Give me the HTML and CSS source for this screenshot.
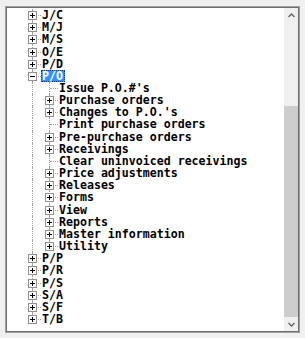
FILE: index.html
```html
<!DOCTYPE html>
<html lang="en">
<head>
    <meta charset="UTF-8">
    <meta name="viewport" content="width=device-width, initial-scale=1.0">
    <title>Menu tree</title>
    <link rel="stylesheet" href="styles.css">
</head>
<body>
    <div class="frame">
        <div class="tree">
            <div class="row"><span class="cell tee"><i class="box plus"></i></span><span class="label">J/C</span></div>
            <div class="row"><span class="cell tee"><i class="box plus"></i></span><span class="label">M/J</span></div>
            <div class="row"><span class="cell tee"><i class="box plus"></i></span><span class="label">M/S</span></div>
            <div class="row"><span class="cell tee"><i class="box plus"></i></span><span class="label">O/E</span></div>
            <div class="row"><span class="cell tee"><i class="box plus"></i></span><span class="label">P/D</span></div>
            <div class="row"><span class="cell tee"><i class="box"></i></span><span class="label selected">P/O</span></div>

            <div class="row"><span class="cell pipe"></span><span class="cell tee"></span><span class="label">Issue P.O.#'s</span></div>
            <div class="row"><span class="cell pipe"></span><span class="cell tee"><i class="box plus"></i></span><span class="label">Purchase orders</span></div>
            <div class="row"><span class="cell pipe"></span><span class="cell tee"><i class="box plus"></i></span><span class="label">Changes to P.O.'s</span></div>
            <div class="row"><span class="cell pipe"></span><span class="cell tee"></span><span class="label">Print purchase orders</span></div>
            <div class="row"><span class="cell pipe"></span><span class="cell tee"><i class="box plus"></i></span><span class="label">Pre-purchase orders</span></div>
            <div class="row"><span class="cell pipe"></span><span class="cell tee"><i class="box plus"></i></span><span class="label">Receivings</span></div>
            <div class="row"><span class="cell pipe"></span><span class="cell tee"></span><span class="label">Clear uninvoiced receivings</span></div>
            <div class="row"><span class="cell pipe"></span><span class="cell tee"><i class="box plus"></i></span><span class="label">Price adjustments</span></div>
            <div class="row"><span class="cell pipe"></span><span class="cell tee"><i class="box plus"></i></span><span class="label">Releases</span></div>
            <div class="row"><span class="cell pipe"></span><span class="cell tee"><i class="box plus"></i></span><span class="label">Forms</span></div>
            <div class="row"><span class="cell pipe"></span><span class="cell tee"><i class="box plus"></i></span><span class="label">View</span></div>
            <div class="row"><span class="cell pipe"></span><span class="cell tee"><i class="box plus"></i></span><span class="label">Reports</span></div>
            <div class="row"><span class="cell pipe"></span><span class="cell tee"><i class="box plus"></i></span><span class="label">Master information</span></div>
            <div class="row"><span class="cell pipe"></span><span class="cell elbow"><i class="box plus"></i></span><span class="label">Utility</span></div>

            <div class="row"><span class="cell tee"><i class="box plus"></i></span><span class="label">P/P</span></div>
            <div class="row"><span class="cell tee"><i class="box plus"></i></span><span class="label">P/R</span></div>
            <div class="row"><span class="cell tee"><i class="box plus"></i></span><span class="label">P/S</span></div>
            <div class="row"><span class="cell tee"><i class="box plus"></i></span><span class="label">S/A</span></div>
            <div class="row"><span class="cell tee"><i class="box plus"></i></span><span class="label">S/F</span></div>
            <div class="row"><span class="cell elbow"><i class="box plus"></i></span><span class="label">T/B</span></div>
        </div>

        <div class="scrollbar">
            <div class="arrow-btn up">
                <svg width="7" height="5" viewBox="0 0 7 5"><polyline points="0.5,4 3.5,1 6.5,4" fill="none" stroke="#606060" stroke-width="1.3"/></svg>
            </div>
            <div class="track">
                <div class="thumb"></div>
            </div>
            <div class="arrow-btn down">
                <svg width="7" height="5" viewBox="0 0 7 5"><polyline points="0.5,1 3.5,4 6.5,1" fill="none" stroke="#606060" stroke-width="1.3"/></svg>
            </div>
        </div>
    </div>
</body>
</html>
```

FILE: styles.css
```css
:root {
    --line: #a0a0a0;
    --box-border: #919191;
    --select-bg: #3391ff;
    --scroll-bg: #f0f0f0;
    --thumb: #cdcdcd;
}

body {
    margin: 0;
    background: #f0f0f0;
    font-family: 'DejaVu Sans Mono', 'Liberation Mono', monospace;
}

/* outer sunken frame */
.frame {
    display: flex;
    width: 295px;
    height: 327px;
    margin: 6px 0 0 5px;
    box-sizing: border-box;
    border: 1px solid #a0a0a0;
    box-shadow: inset 0 0 0 1px #6d6d6d;
    padding: 1px;
    background: #fff;
}

/* tree */
.tree {
    flex: 1;
    padding: 1px 0 0 17px;
    overflow: hidden;
}

.row {
    display: flex;
    align-items: stretch;
    height: 12.16px;
}

.cell {
    position: relative;
    flex: none;
    width: 17px;
}

.cell::before {
    content: '';
    position: absolute;
    left: 8px;
    top: 0;
    bottom: 0;
    border-left: 1px dotted var(--line);
}

.cell.elbow::before {
    bottom: 50%;
}

.cell.tee::after,
.cell.elbow::after {
    content: '';
    position: absolute;
    left: 9px;
    right: 0;
    top: 50%;
    border-top: 1px dotted var(--line);
}

.box {
    position: absolute;
    z-index: 1;
    left: 4px;
    top: 50%;
    width: 9px;
    height: 9px;
    margin-top: -4px;
    box-sizing: border-box;
    border: 1px solid var(--box-border);
    background: #fff;
}

.box::before {
    content: '';
    position: absolute;
    left: 1px;
    top: 3px;
    width: 5px;
    height: 1px;
    background: #000;
}

.box.plus::after {
    content: '';
    position: absolute;
    left: 3px;
    top: 1px;
    width: 1px;
    height: 5px;
    background: #000;
}

.label {
    display: flex;
    align-items: center;
    box-sizing: border-box;
    border: 1px solid transparent;
    padding: 0 1px 0 0;
    font-size: 11.6px;
    font-weight: bold;
    color: #000;
    white-space: nowrap;
    line-height: 10px;
}

.label.selected {
    background: var(--select-bg);
    color: #fff;
    border: 1px dotted #0d3f8a;
}

/* vertical scrollbar */
.scrollbar {
    display: flex;
    flex-direction: column;
    width: 14px;
    background: var(--scroll-bg);
}

.arrow-btn {
    display: flex;
    justify-content: center;
    align-items: center;
    height: 15px;
}

.arrow-btn.down {
    height: 14px;
}

.track {
    flex: 1;
    display: flex;
    flex-direction: column;
}

.thumb {
    margin-top: 83px;
    flex: 1;
    background: var(--thumb);
}
```
